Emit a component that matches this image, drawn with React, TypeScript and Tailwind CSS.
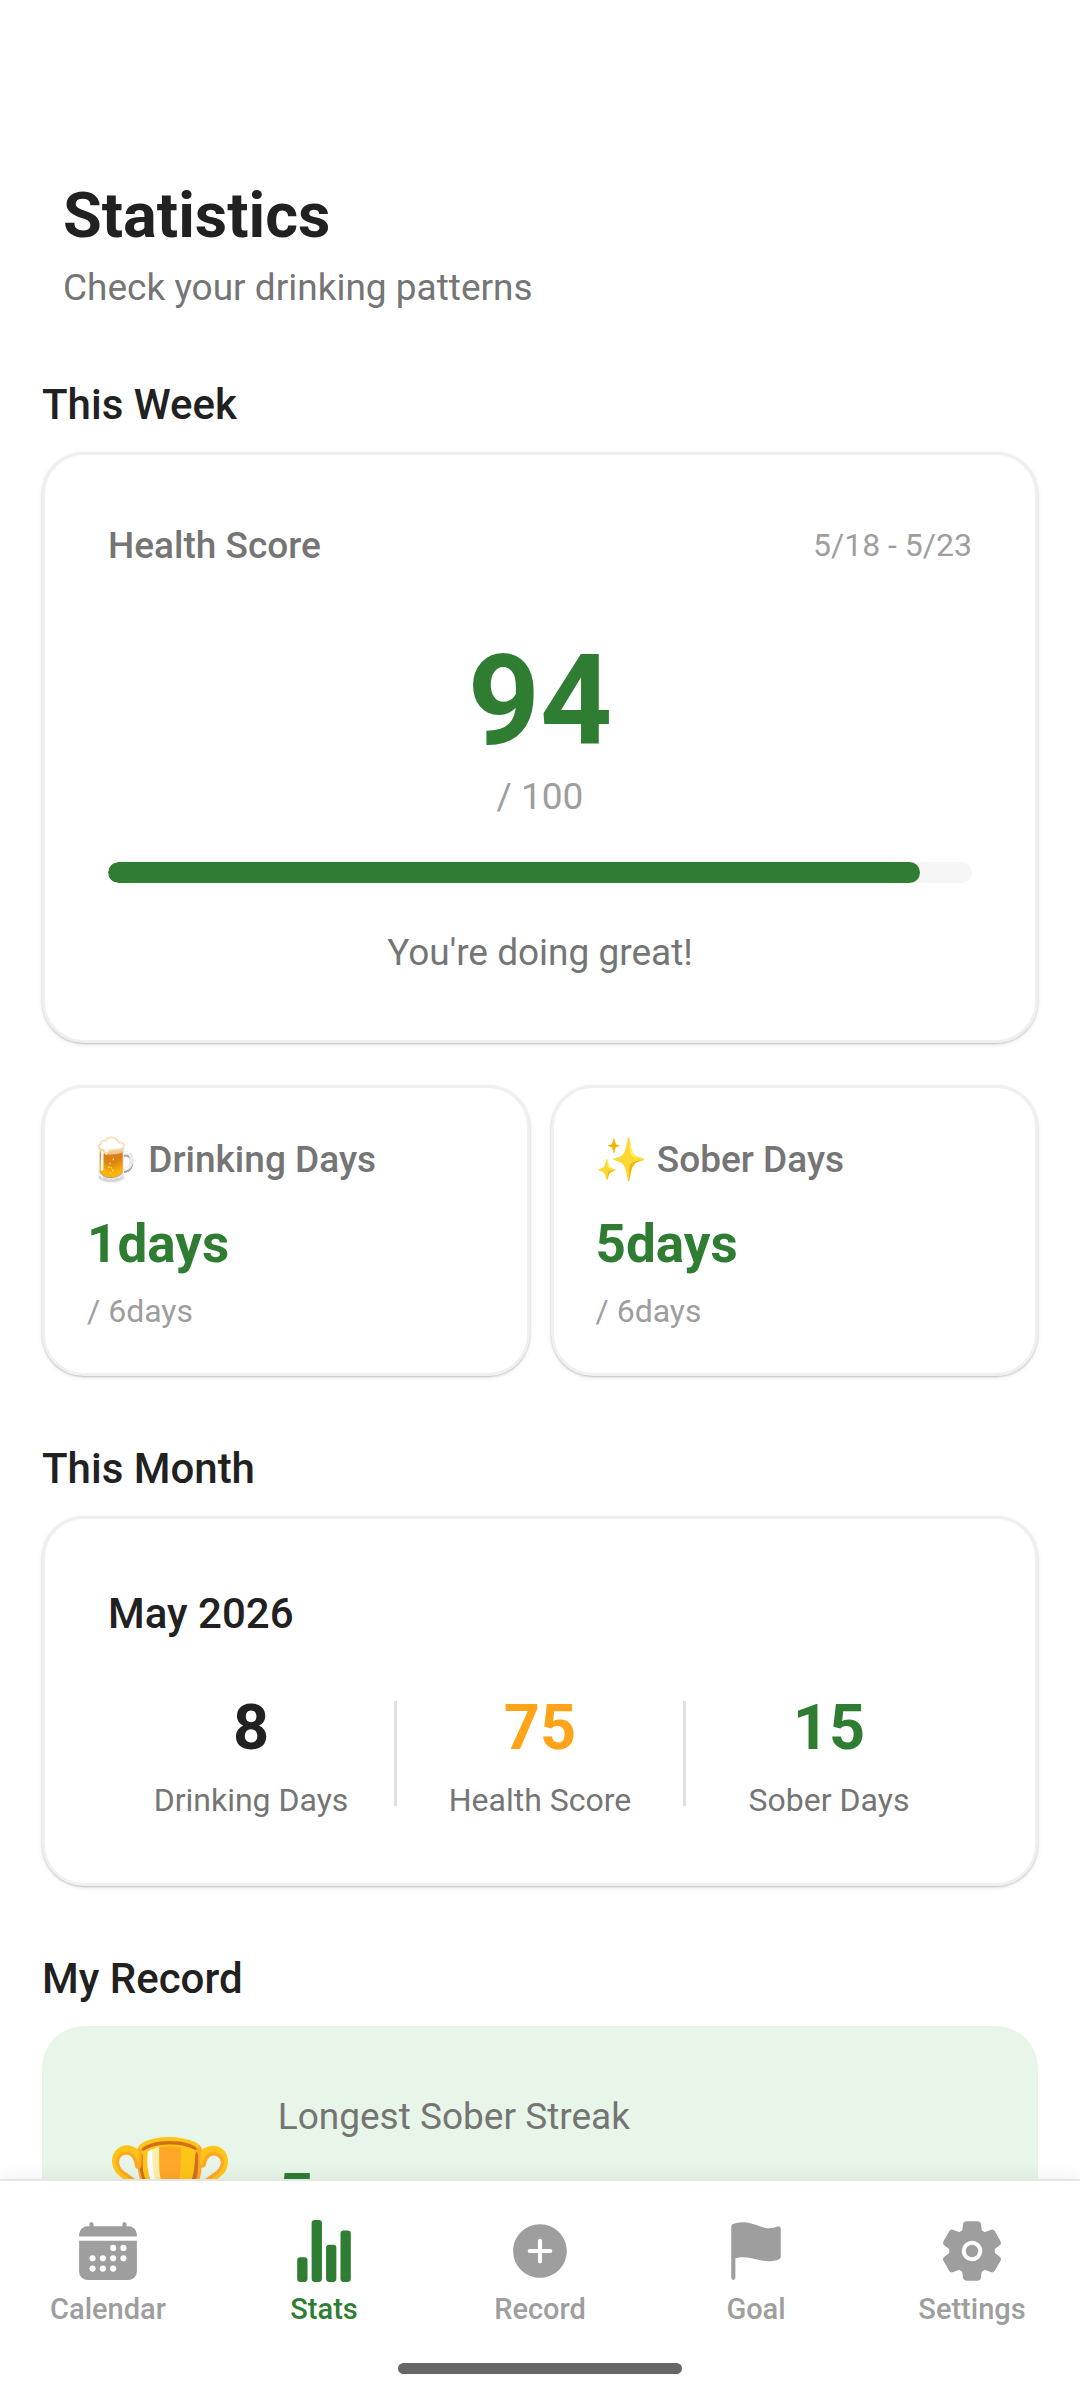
/**
 * Statistics screen
 * Weekly score, monthly summary and personal record, with the bottom tab bar
 */

import React from 'react'
import { IoAddCircle, IoCalendar, IoFlag, IoSettings, IoStatsChart } from 'react-icons/io5'

interface DayStat {
  emoji: string
  label: string
  value: number
  total: number
}

interface MonthStat {
  label: string
  value: number
  color: string
}

const WEEK_SCORE = 94

const WEEK_STATS: DayStat[] = [
  { emoji: '🍺', label: 'Drinking Days', value: 1, total: 6 },
  { emoji: '✨', label: 'Sober Days', value: 5, total: 6 },
]

const MONTH_STATS: MonthStat[] = [
  { label: 'Drinking Days', value: 8, color: 'text-[#212121]' },
  { label: 'Health Score', value: 75, color: 'text-[#ffa319]' },
  { label: 'Sober Days', value: 15, color: 'text-[#2e7d32]' },
]

const TABS = [
  { label: 'Calendar', Icon: IoCalendar },
  { label: 'Stats', Icon: IoStatsChart },
  { label: 'Record', Icon: IoAddCircle },
  { label: 'Goal', Icon: IoFlag },
  { label: 'Settings', Icon: IoSettings },
]

const CARD =
  'rounded-[42px] border-[3px] border-[#f0f0f0] bg-white shadow-[0_1px_2px_rgba(0,0,0,0.2),0_2px_5px_rgba(0,0,0,0.08)]'

const Section: React.FC<{ title: string; children: React.ReactNode }> = ({ title, children }) => (
  <section className="mt-[67px]">
    <h2 className="mb-[21px] text-[42px] leading-[52px] font-medium">{title}</h2>
    {children}
  </section>
)

const WeekScoreCard: React.FC = () => (
  <div className={`${CARD} px-[63px] pt-[67px] pb-[63px]`}>
    <div className="flex items-start justify-between">
      <h3 className="text-[37px] leading-[48px] font-medium text-[#757575]">Health Score</h3>
      <span className="text-[32px] leading-[46px] text-[#9e9e9e]">5/18 - 5/23</span>
    </div>

    <div className="mt-[59px] text-center">
      <p className="text-[126px] leading-[144px] font-bold text-[#2e7d32]">{WEEK_SCORE}</p>
      <p className="text-[37px] leading-[48px] text-[#9e9e9e]">/ 100</p>
    </div>

    <div
      role="progressbar"
      aria-label="Health Score"
      aria-valuenow={WEEK_SCORE}
      className="mt-[41px] h-[21px] overflow-hidden rounded-full bg-[#f5f5f5]"
    >
      <div className="h-full rounded-full bg-[#2e7d32]" style={{ width: `${WEEK_SCORE}%` }} />
    </div>

    <p className="mt-[46px] text-center text-[37px] leading-[48px] text-[#757575]">
      You're doing great!
    </p>
  </div>
)

const DayCard: React.FC<{ stat: DayStat }> = ({ stat }) => (
  <div className={`${CARD} flex-1 px-[42px] pt-12 pb-[42px]`}>
    <h3 className="flex items-center gap-[9px] text-[37px] leading-[48px] font-medium text-[#757575]">
      <span className="text-[42px]">{stat.emoji}</span>
      {stat.label}
    </h3>
    <p className="mt-7 text-[53px] leading-[64px] font-bold text-[#2e7d32]">{stat.value}days</p>
    <p className="mt-[15px] text-[32px] leading-[40px] text-[#9e9e9e]">/ {stat.total}days</p>
  </div>
)

const MonthCard: React.FC = () => (
  <div className={`${CARD} px-[63px] pt-[69px] pb-[63px]`}>
    <h3 className="text-[42px] leading-[52px] font-medium">May 2026</h3>
    <div className="mt-[46px] flex items-center">
      {MONTH_STATS.map((stat, i) => (
        <React.Fragment key={stat.label}>
          {i > 0 && <div className="h-[105px] w-[3px] bg-[#e0e0e0]" />}
          <div className="flex-1 text-center">
            <p className={`text-[63px] leading-[84px] font-bold ${stat.color}`}>{stat.value}</p>
            <p className="mt-2.5 text-[32px] leading-[40px] text-[#757575]">{stat.label}</p>
          </div>
        </React.Fragment>
      ))}
    </div>
  </div>
)

const RecordCard: React.FC = () => (
  <div className="flex items-start gap-[42px] rounded-[42px] bg-[#e8f5e9] px-[63px] py-[67px]">
    <span className="pt-10 text-[105px] leading-[124px]">🏆</span>
    <div>
      <h3 className="text-[37px] leading-[48px] text-[#757575]">Longest Sober Streak</h3>
      <p className="mt-3.5 text-[63px] leading-[84px] font-bold text-[#2e7d32]">5</p>
    </div>
  </div>
)

const TabBar: React.FC = () => (
  <nav className="relative border-t-2 border-[#e5e5e5] bg-white pt-[37px] pb-[26px] shadow-[0_-4px_16px_rgba(0,0,0,0.05)]">
    <div className="flex">
      {TABS.map(({ label, Icon }) => (
        <button
          key={label}
          className={`flex flex-1 flex-col items-center gap-[7px] ${
            label === 'Stats' ? 'text-[#2e7d32]' : 'text-[#9e9e9e]'
          }`}
        >
          <Icon className="size-[66px]" />
          <span className="text-[29px] leading-[36px] font-medium">{label}</span>
        </button>
      ))}
    </div>
    {/* home indicator */}
    <div className="mx-auto mt-9 h-[11px] w-[284px] rounded-full bg-[#666666]" />
  </nav>
)

export default function App() {
  return (
    <div className="flex h-screen flex-col bg-white font-[Roboto,'Noto_Color_Emoji',sans-serif] text-[#212121]">
      <main className="min-h-0 flex-1 overflow-y-auto px-[42px] pt-[174px] pb-10 [scrollbar-width:none]">
        <header className="px-[21px]">
          <h1 className="text-[63px] leading-[84px] font-bold">Statistics</h1>
          <p className="mt-1.5 text-[37px] leading-[48px] text-[#757575]">
            Check your drinking patterns
          </p>
        </header>

        <Section title="This Week">
          <WeekScoreCard />
          <div className="mt-[42px] flex gap-[21px]">
            {WEEK_STATS.map(stat => (
              <DayCard key={stat.label} stat={stat} />
            ))}
          </div>
        </Section>

        <Section title="This Month">
          <MonthCard />
        </Section>

        <Section title="My Record">
          <RecordCard />
        </Section>
      </main>

      <TabBar />
    </div>
  )
}
